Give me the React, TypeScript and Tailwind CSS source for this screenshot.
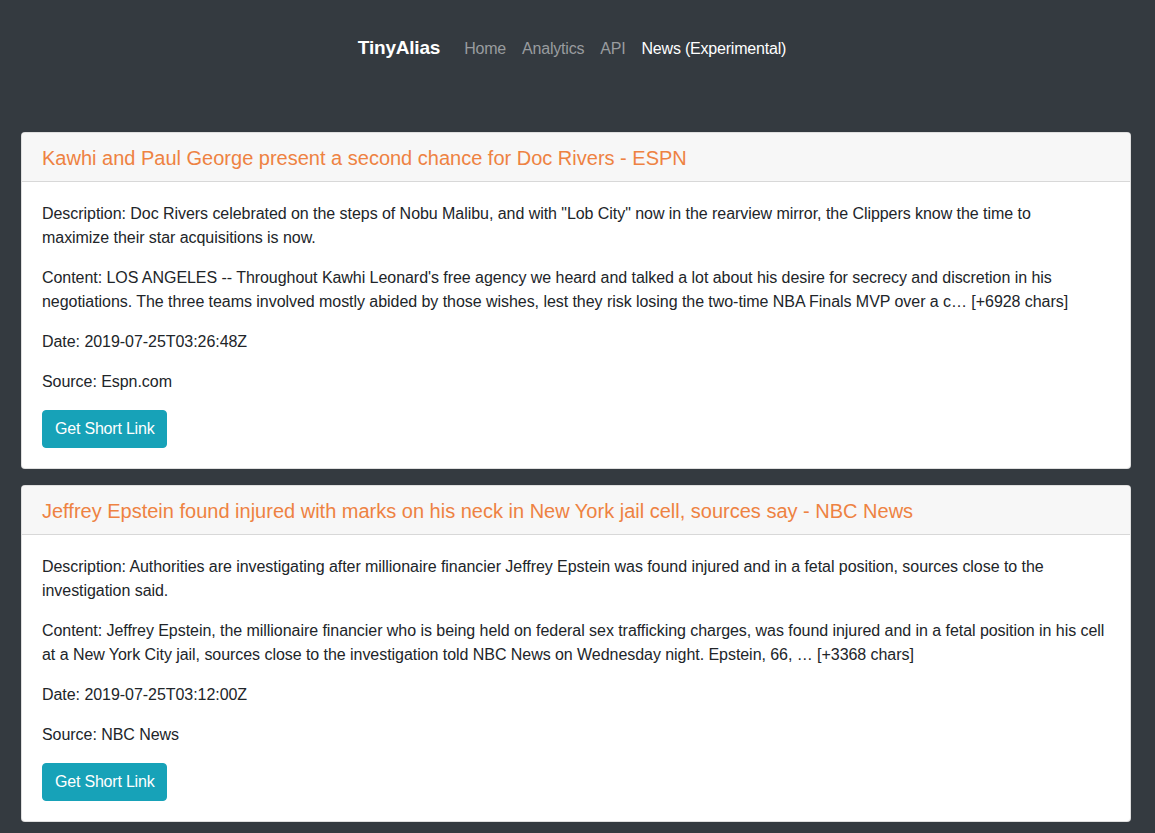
const articles = [
  {
    title: "Kawhi and Paul George present a second chance for Doc Rivers - ESPN",
    description: [
      'Description: Doc Rivers celebrated on the steps of Nobu Malibu, and with "Lob City" now in the rearview mirror, the Clippers know the time to',
      "maximize their star acquisitions is now.",
    ],
    content: [
      "Content: LOS ANGELES -- Throughout Kawhi Leonard's free agency we heard and talked a lot about his desire for secrecy and discretion in his",
      "negotiations. The three teams involved mostly abided by those wishes, lest they risk losing the two-time NBA Finals MVP over a c… [+6928 chars]",
    ],
    date: "2019-07-25T03:26:48Z",
    source: "Espn.com",
  },
  {
    title: "Jeffrey Epstein found injured with marks on his neck in New York jail cell, sources say - NBC News",
    description: [
      "Description: Authorities are investigating after millionaire financier Jeffrey Epstein was found injured and in a fetal position, sources close to the",
      "investigation said.",
    ],
    content: [
      "Content: Jeffrey Epstein, the millionaire financier who is being held on federal sex trafficking charges, was found injured and in a fetal position in his cell",
      "at a New York City jail, sources close to the investigation told NBC News on Wednesday night. Epstein, 66, … [+3368 chars]",
    ],
    date: "2019-07-25T03:12:00Z",
    source: "NBC News",
  },
];

// keep the line breaks of the original layout
function Lines({ lines }: { lines: string[] }) {
  return (
    <p className="mb-4">
      {lines.map((l) => (
        <span key={l} className="block whitespace-nowrap">
          {l}
        </span>
      ))}
    </p>
  );
}

function NewsCard({ a }: { a: (typeof articles)[number] }) {
  return (
    <div className="bg-white border border-black/[.125] rounded-[4px] mb-4">
      <div className="bg-[#f7f7f7] border-b border-black/[.125] px-5 pt-[13px] pb-[11px] rounded-t-[3px]">
        <h5 className="text-[20px] leading-[24px] text-[#ee8242]">{a.title}</h5>
      </div>
      <div className="p-5 text-[16px] leading-[24px] text-[#212529] tracking-[-0.05px]">
        <Lines lines={a.description} />
        <Lines lines={a.content} />
        <p className="mb-4">Date: {a.date}</p>
        <p className="mb-4">Source: {a.source}</p>
        <button className="bg-[#17a2b8] border border-[#17a2b8] text-white px-3 py-1.5 rounded-[4px] leading-[24px] tracking-[-0.2px]">
          Get Short Link
        </button>
      </div>
    </div>
  );
}

export default function App() {
  return (
    <div className="min-h-screen bg-[#343a40] font-['Liberation_Sans',Arial,sans-serif]">
      <nav className="h-[97px] flex items-center justify-center pr-[3px]">
        <div className="flex items-center">
          <span className="text-white text-[19px] font-semibold mr-4 tracking-[-0.2px]">TinyAlias</span>
          <ul className="flex text-[16px] tracking-[-0.2px]">
            <li className="px-2 text-[#999c9f]">Home</li>
            <li className="px-2 text-[#999c9f]">Analytics</li>
            <li className="px-2 text-[#999c9f]">API</li>
            <li className="px-2 text-white">News (Experimental)</li>
          </ul>
        </div>
      </nav>
      <main className="pt-[35px] ml-[21px] mr-[24px] pb-[1px]">
        {articles.map((a) => (
          <NewsCard key={a.title} a={a} />
        ))}
      </main>
    </div>
  );
}
